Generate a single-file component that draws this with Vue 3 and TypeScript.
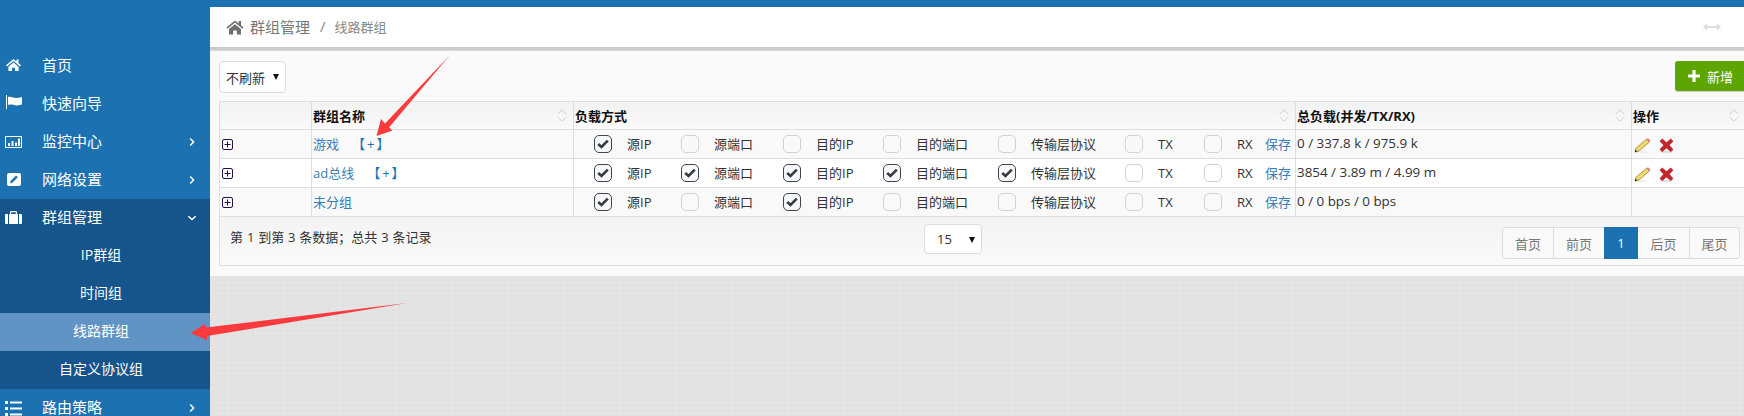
<script setup lang="ts">
interface NavItem { label: string; icon?: string; arrow?: 'right' | 'down'; }
interface Row { name: string; add: boolean; flags: boolean[]; load: string; actions: boolean; }

const navTop: NavItem[] = [
  { label: '首页', icon: 'home' },
  { label: '快速向导', icon: 'flag' },
  { label: '监控中心', icon: 'chart', arrow: 'right' },
  { label: '网络设置', icon: 'edit', arrow: 'right' },
];
const subItems = ['IP群组', '时间组', '线路群组', '自定义协议组'];
const options = ['源IP', '源端口', '目的IP', '目的端口', '传输层协议', 'TX', 'RX'];
const rows: Row[] = [
  { name: '游戏', add: true, flags: [true, false, false, false, false, false, false], load: '0 / 337.8 k / 975.9 k', actions: true },
  { name: 'ad总线', add: true, flags: [true, true, true, true, true, false, false], load: '3854 / 3.89 m / 4.99 m', actions: true },
  { name: '未分组', add: false, flags: [true, false, true, false, false, false, false], load: '0 / 0 bps / 0 bps', actions: false },
];
const headers = [
  { label: '', sort: false },
  { label: '群组名称', sort: true },
  { label: '负载方式', sort: true },
  { label: '总负载(并发/TX/RX)', sort: true },
  { label: '操作', sort: true },
];
const pages = ['首页', '前页', '1', '后页', '尾页'];
</script>

<template>
  <div class="page">
    <div class="topbar"></div>
    <div class="body">
      <aside class="sidebar">
        <div v-for="item in navTop" :key="item.label" class="nav-item">
          <svg class="nav-icon" viewBox="0 0 18 18" fill="#fff">
            <path v-if="item.icon === 'home'" d="M8.5 2 L1 8.3 L2 9.4 L8.5 4 L15 9.4 L16 8.3 L13.5 6.2 V2.6 H11.5 V4.5Z M3.4 9.8 L8.5 5.6 L13.6 9.8 V14 H10 V10.8 H7 V14 H3.4Z" />
            <path v-else-if="item.icon === 'flag'" d="M1 0 H2 V14 H1Z M3 2 C6 1 8 3 11 3 C13 3 15 2.4 17 2 V9.6 C15 10.2 13 10.6 11 10.4 C8 10 6 9 3 10Z" />
            <path v-else-if="item.icon === 'chart'" fill-rule="evenodd" d="M0 3 H17 V15 H0Z M1 4 V14 H16 V4Z M3 10 H5 V13 H3Z M6.5 8 H8.5 V13 H6.5Z M10 9.5 H12 V13 H10Z M13 5.5 H15 V13 H13Z" />
            <path v-else-if="item.icon === 'edit'" fill-rule="evenodd" d="M4 2 H14 Q16 2 16 4 V13 Q16 15 14 15 H4 Q2 15 2 13 V4 Q2 2 4 2Z M11 4.5 L5.6 10 L5 12.4 L7.4 11.8 L12.8 6.3Z" />
          </svg>
          <span class="nav-label">{{ item.label }}</span>
          <svg v-if="item.arrow" class="nav-arrow" viewBox="0 0 10 10" fill="none" stroke="#fff" stroke-width="1.5"><path d="M3.2 1.5 L6.6 5 L3.2 8.5" /></svg>
        </div>

        <div class="nav-item nav-open">
          <svg class="nav-icon" viewBox="0 0 18 18" fill="#fff">
            <path d="M6 2 H11 Q12 2 12 3 V5 H16 Q17 5 17 6 V14 Q17 15 16 15 H1 Q0 15 0 14 V6 Q0 5 1 5 H5 V3 Q5 2 6 2Z M6.2 3.2 V5 H10.8 V3.2Z M3 5 V15 H4 V5Z M13 5 V15 H14 V5Z" fill-rule="evenodd" />
          </svg>
          <span class="nav-label">群组管理</span>
          <svg class="nav-arrow" viewBox="0 0 10 10" fill="none" stroke="#fff" stroke-width="1.5"><path d="M1.3 3.2 L5 6.6 L8.7 3.2" /></svg>
        </div>
        <div v-for="sub in subItems" :key="sub" class="nav-sub" :class="{ active: sub === '线路群组' }">{{ sub }}</div>

        <div class="nav-item">
          <svg class="nav-icon" viewBox="0 0 18 18" fill="#fff">
            <path d="M0 2 H3 V5 H0Z M5 2.5 H17 V4.5 H5Z M0 8 H3 V11 H0Z M5 8.5 H17 V10.5 H5Z M0 14 H3 V17 H0Z M5 14.5 H17 V16.5 H5Z" />
          </svg>
          <span class="nav-label">路由策略</span>
          <svg class="nav-arrow" viewBox="0 0 10 10" fill="none" stroke="#fff" stroke-width="1.5"><path d="M3.2 1.5 L6.6 5 L3.2 8.5" /></svg>
        </div>
      </aside>

      <main class="main">
        <header class="crumbs">
          <svg class="crumb-home" viewBox="0 0 18 15" fill="#6f6f6f">
            <path d="M9 0.5 L0.4 7.4 L1.5 8.7 L9 2.6 L16.5 8.7 L17.6 7.4 L15 5.3 V1 H12.6 V3.4Z M3 9 L9 4.2 L15 9 V14.6 H10.8 V10.4 H7.2 V14.6 H3Z" />
          </svg>
          <span class="crumb-main">群组管理</span>
          <span class="crumb-sep">/</span>
          <span class="crumb-sub">线路群组</span>
          <svg class="crumb-resize" viewBox="0 0 18 8" fill="#dcdcdc"><path d="M0 4 L4 0.5 V3 H14 V0.5 L18 4 L14 7.5 V5 H4 V7.5Z" /></svg>
        </header>
        <div class="crumb-shade"></div>

        <section class="panel">
          <div class="toolbar">
            <div class="select select-refresh">不刷新<i class="caret"></i></div>
            <button class="add-btn" type="button">
              <svg viewBox="0 0 12 12" fill="#fff" width="12" height="12"><path d="M4.4 0 H7.6 V4.4 H12 V7.6 H7.6 V12 H4.4 V7.6 H0 V4.4 H4.4Z" /></svg>
              新增
            </button>
          </div>

          <table class="grid">
            <colgroup>
              <col style="width: 92px" /><col style="width: 262px" /><col style="width: 722px" /><col style="width: 336px" /><col style="width: 114px" />
            </colgroup>
            <thead>
              <tr>
                <th v-for="(h, i) in headers" :key="i">
                  <div class="th-inner">
                    <span>{{ h.label }}</span>
                    <svg v-if="h.sort" class="sort" viewBox="0 0 10 13" fill="none" stroke="#cfcfcf" stroke-width="1"><path d="M0.7 5 L5 0.8 L9.3 5 M0.7 8 L5 12.2 L9.3 8" /></svg>
                  </div>
                </th>
              </tr>
            </thead>
            <tbody>
              <tr v-for="row in rows" :key="row.name">
                <td class="cell-expand">
                  <svg viewBox="0 0 11 11" width="11" height="11" fill="none" stroke="#2a0f4a" stroke-width="1"><rect x="0.5" y="0.5" width="10" height="10" rx="1.5" /><path d="M2.5 5.5 H8.5 M5.5 2.5 V8.5" /></svg>
                </td>
                <td class="cell-name">
                  <a class="link">{{ row.name }}</a><a v-if="row.add" class="add-link">【+】</a>
                </td>
                <td class="cell-load">
                  <div class="opts">
                    <label v-for="(opt, i) in options" :key="opt" class="opt">
                      <span class="cb" :class="{ on: row.flags[i] }">
                        <svg v-if="row.flags[i]" viewBox="0 0 12 10" width="12" height="10" fill="none" stroke="#3a3a3a" stroke-width="2.6"><path d="M1.2 5 L4.5 8 L10.8 1.6" /></svg>
                      </span>
                      <span class="opt-text">{{ opt }}</span>
                    </label>
                    <a class="link opt-text">保存</a>
                  </div>
                </td>
                <td class="cell-total">{{ row.load }}</td>
                <td class="cell-actions">
                  <template v-if="row.actions">
                    <svg viewBox="0 0 17 15" width="17" height="15">
                      <path d="M0 14.6 H14 L11 13.6 H2Z" fill="#e4e4e4" />
                      <path d="M1 14 L2 10.2 L12.6 1.2 L15.4 4 L5 13Z" fill="#f0d96a" stroke="#8a7a30" stroke-width="0.7" />
                      <path d="M12.6 1.2 L14 0.2 L16.4 2.8 L15.4 4Z" fill="#e8737a" />
                      <path d="M1 14 L1.5 11.8 L3.2 13.4Z" fill="#111" />
                    </svg>
                    <svg class="del" viewBox="0 0 15 15" width="15" height="15">
                      <path d="M1 12.8 L3 15 H12 L14 12.8Z" fill="#dedede" />
                      <path d="M3.2 0.6 L7.5 4.2 L11.8 0.6 L14.4 3.2 L10.6 7.3 L14.4 11.4 L11.8 14 L7.5 10.3 L3.2 14 L0.6 11.4 L4.4 7.3 L0.6 3.2Z" fill="#c3272b" />
                    </svg>
                  </template>
                </td>
              </tr>
            </tbody>
          </table>

          <footer class="foot">
            <div class="info">第 1 到第 3 条数据；总共 3 条记录</div>
            <div class="select select-size">15<i class="caret"></i></div>
            <nav class="pager">
              <span v-for="p in pages" :key="p" class="pg" :class="{ current: p === '1' }">{{ p }}</span>
            </nav>
          </footer>
        </section>
        <div class="texture"></div>
      </main>
    </div>

    <svg class="arrows" viewBox="0 0 1744 416" width="1744" height="416">
      <polygon points="376.5,136 381,119 385,123.5 450,55 389,127.5 392.5,130.5" fill="#fb3a3d" />
      <polygon points="190.5,333 205,324 206,327.5 407,303 207,336 207,340" fill="#fb3a3d" />
    </svg>
  </div>
</template>

<style scoped>
.page {
  position: relative;
  width: 1744px;
  height: 416px;
  overflow: hidden;
  display: flex;
  flex-direction: column;
  font-family: "Open Sans", "Noto Sans CJK SC", sans-serif;
  font-size: 13px;
  color: #333;
}
.topbar { height: 7px; background: #1c72b1; flex: none; }
.body { flex: 1; display: flex; min-height: 0; }

.sidebar { width: 210px; flex: none; background: #1c72b1; padding-top: 40px; color: #fff; }
.nav-item { height: 38px; display: flex; align-items: center; padding: 0 13px 0 5px; font-size: 15px; }
.nav-open { background: #15558c; }
.nav-icon { width: 18px; height: 18px; flex: none; }
.nav-label { margin-left: 19px; flex: 1; padding-bottom: 4px; }
.nav-arrow { width: 10px; height: 10px; flex: none; }
.nav-sub { height: 38px; box-sizing: border-box; display: flex; align-items: center; justify-content: center; background: #15558c; font-size: 14px; padding: 0 8px 4px 0; }
.nav-sub.active { background: #6094c5; }

.main { flex: 1; min-width: 0; display: flex; flex-direction: column; overflow: hidden; }
.crumbs { height: 40px; flex: none; background: #fff; display: flex; align-items: center; padding-left: 16px; color: #777; }
.crumb-home { width: 18px; height: 15px; margin-right: 6px; }
.crumb-main { font-size: 15px; padding-bottom: 2px; }
.crumb-sep { margin: 0 9px 0 10px; font-size: 15px; color: #888; padding-bottom: 2px; }
.crumb-sub { font-size: 13px; color: #888; padding-bottom: 2px; }
.crumb-resize { width: 18px; height: 8px; margin-left: auto; margin-right: 23px; }
.crumb-shade { height: 4px; flex: none; background: linear-gradient(#c4c4c4, #d8d8d8); }

.panel { flex: none; background: #fafafa; padding: 10px 0 10px 9px; border-bottom: 1px solid #e2e2e2; }
.toolbar { display: flex; justify-content: space-between; align-items: flex-start; margin-bottom: 8px; }

.select {
  height: 32px;
  box-sizing: border-box;
  display: flex;
  align-items: center;
  border: 1px solid #ddd;
  border-radius: 4px;
  background: #fff;
  position: relative;
  color: #333;
}
.select-refresh { width: 67px; padding-left: 6px; }
.select-size { width: 58px; height: 30px; padding-left: 12px; margin-top: 7px; }
.caret {
  position: absolute;
  top: 12px;
  right: 6px;
  width: 0;
  height: 0;
  border-left: 3px solid transparent;
  border-right: 3px solid transparent;
  border-top: 6px solid #111;
}
.add-btn {
  width: 69px;
  height: 30px;
  padding: 0 0 0 13px;
  border: 0;
  border-radius: 3px 0 0 3px;
  background: #5fa500;
  color: #fff;
  font: inherit;
  display: flex;
  align-items: center;
  gap: 7px;
  box-shadow: 0 1px 1px rgba(0, 0, 0, 0.2);
}

.grid { width: 1526px; table-layout: fixed; border-collapse: collapse; background: #fff; }
.grid th, .grid td { border: 1px solid #ddd; padding: 0 2px 0 1px; box-sizing: border-box; white-space: nowrap; }
.grid th { height: 28px; text-align: left; font-weight: 700; color: #111; background: linear-gradient(#f2f2f2, #fafafa); }
.grid td { height: 29px; }
.grid tbody tr:nth-child(odd) td { background: #f9f9f9; }
.th-inner { display: flex; align-items: center; justify-content: space-between; padding-right: 4px; }
.sort { width: 10px; height: 13px; flex: none; }
.cell-expand svg { display: block; margin-left: 1px; }
.link { color: #3b7db8; }
.add-link { color: #1c72b1; margin-left: 13px; letter-spacing: 2px; }
.grid td.cell-load { padding: 0; }
.grid td.cell-total { font-size: 13.4px; padding-bottom: 2px; }
.grid td.cell-name { padding-bottom: 1px; }
.opts { display: grid; grid-template-columns: 87px 102px 100px 115px 127px 79px 61px auto; padding-left: 20px; align-items: center; }
.opt { display: flex; align-items: center; gap: 15px; }
.opt-text { padding-bottom: 1px; }
.cb {
  width: 18px;
  height: 18px;
  box-sizing: border-box;
  display: flex;
  align-items: center;
  justify-content: center;
  border: 1px solid #d2d2d2;
  border-radius: 5px;
}
.cb.on { border: 1.5px solid #444; background: #f4f7fc; }
.cell-actions svg { display: inline-block; vertical-align: middle; }
.grid td.cell-actions { padding-left: 2px; }
.del { margin-left: 8px; }

.foot {
  width: 1526px;
  height: 49px;
  box-sizing: border-box;
  display: flex;
  align-items: flex-start;
  padding: 0 4px 0 10px;
  border: 1px solid #ddd;
  border-top: 0;
  background: linear-gradient(#f3f3f3, #fafafa);
}
.info { width: 694px; flex: none; margin-top: 10px; word-spacing: 0.5px; }
.pager { margin-left: auto; margin-top: 10px; display: flex; height: 32px; box-sizing: border-box; border: 1px solid #ddd; border-radius: 3px; background: #fafafa; }
.pg { box-sizing: border-box; width: 50px; display: flex; align-items: center; justify-content: center; color: #777; }
.pg:nth-child(2) { width: 51px; border-left: 1px solid #ddd; }
.pg:nth-child(4) { width: 51px; }
.pg:nth-child(5) { border-left: 1px solid #ddd; }
.pg.current { width: 34px; margin: -1px 0; background: #1c72b1; color: #fff; }

.texture {
  flex: 1;
  background-color: #e4e4e4;
  background-image:
    repeating-linear-gradient(0deg, rgba(0, 0, 0, 0.01) 0 1px, transparent 1px 5px),
    repeating-linear-gradient(90deg, rgba(0, 0, 0, 0.01) 0 1px, transparent 1px 7px);
}

.arrows { position: absolute; left: 0; top: 0; pointer-events: none; }
</style>

<style>
html, body { overflow: hidden; }
</style>
